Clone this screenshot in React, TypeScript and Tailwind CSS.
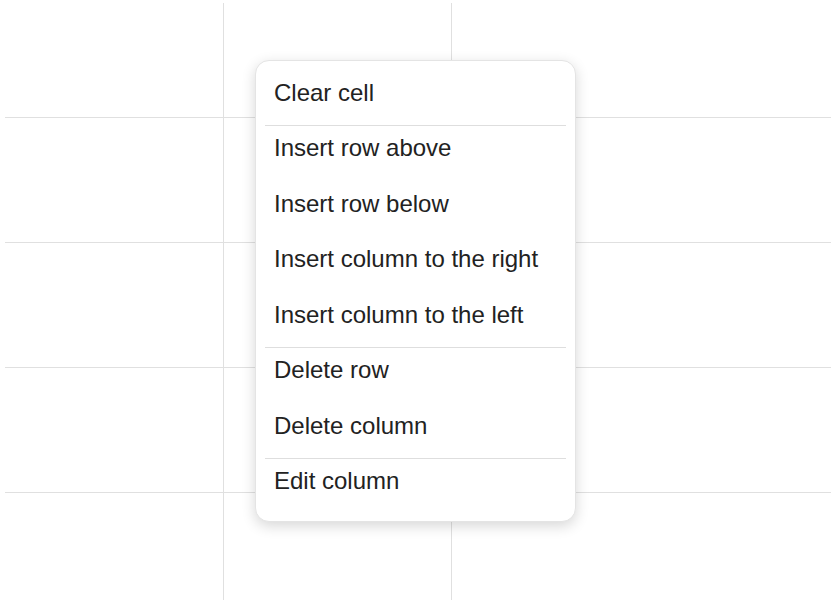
const rows = [115, 125, 125, 125, 125];
const cols = ['w-[219px] border-r', 'w-[228px] border-r', 'w-[379px]'];

type Item = { label: string; divider?: boolean };

const items: Item[] = [
  { label: 'Clear cell' },
  { label: 'Insert row above', divider: true },
  { label: 'Insert row below' },
  { label: 'Insert column to the right' },
  { label: 'Insert column to the left' },
  { label: 'Delete row', divider: true },
  { label: 'Delete column' },
  { label: 'Edit column', divider: true },
];

function ContextMenu() {
  return (
    <div className="absolute left-[255px] top-[60px] w-[321px] rounded-[14px] border border-[#e4e4e4] bg-white px-[9px] pt-[8.5px] pb-[7.5px] shadow-[0_4px_14px_rgba(0,0,0,0.16)]">
      {items.map((item) => (
        <div
          key={item.label}
          className={`h-[55.5px] border-t px-[9px] pt-[4px] text-[24px] leading-[36px] text-[#222222] ${
            item.divider ? 'border-[#dedede]' : 'border-transparent'
          }`}
        >
          {item.label}
        </div>
      ))}
    </div>
  );
}

export default function App() {
  return (
    <div
      className="relative h-[600px] w-[840px] overflow-hidden bg-white"
      style={{ fontFamily: "'Liberation Sans', Arial, sans-serif" }}
    >
      {/* table grid behind the menu */}
      <div className="flex flex-col pt-[3px] pl-[5px]">
        {rows.map((h, r) => (
          <div key={r} className="flex" style={{ height: h }}>
            {cols.map((c, i) => (
              <div
                key={i}
                className={`${c} border-[#e0e0e0] ${r < rows.length - 1 ? 'border-b' : ''}`}
              />
            ))}
          </div>
        ))}
      </div>

      <ContextMenu />
    </div>
  );
}
